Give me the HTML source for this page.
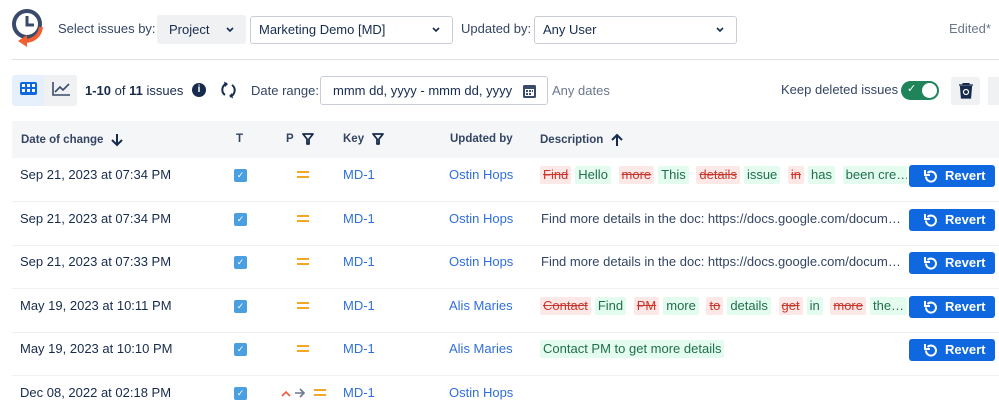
<!DOCTYPE html>
<html><head><meta charset="utf-8"><style>
*{box-sizing:border-box;margin:0;padding:0}
body{width:999px;height:410px;overflow:hidden;background:#fff;font-family:"Liberation Sans",Arial,sans-serif;font-size:13px;color:#172b4d;position:relative}
.a{position:absolute;white-space:nowrap}
.sel{position:absolute;border:1px solid #c9ced6;border-radius:3px;height:28px;line-height:26px;padding-left:8px;font-size:13px;background:#fff;white-space:nowrap}
.chev{position:absolute;right:12px;top:10px}
.hdr{position:absolute;left:12px;top:121px;width:987px;height:37px;background:#f5f6f8}
.hdr span{position:absolute;top:12px;font-size:11.5px;font-weight:bold;color:#344563;white-space:nowrap}
.hdr svg{vertical-align:middle;margin-left:8px}
.row{position:absolute;left:12px;width:987px;height:44px;border-bottom:1px solid #eef0f2}
.row .c{position:absolute;top:0;line-height:34px;font-size:13px;white-space:nowrap}
.cb{position:absolute;left:222px;top:11px;width:13px;height:13px;background:#4a9fe0;border-radius:2px;color:#fff;font-size:9px;text-align:center;line-height:13px}
.eq{position:absolute;top:13px;width:12px;height:7px;border-top:2px solid #f5a623;border-bottom:2px solid #f5a623}
.lnk{color:#2f6fdc}
.rev{position:absolute;left:897px;top:7px;width:86px;height:22px;background:#1068e0;border-radius:3px;color:#fff;font-weight:bold;font-size:13px;line-height:22px;padding-left:36px}
.rev svg{position:absolute;left:14px;top:4px}
.d{position:absolute;left:528px;top:8px;height:18px;line-height:18px;font-size:13px;white-space:nowrap;width:367px;overflow:hidden;color:#344563}
.d i{font-style:normal;display:inline-block;padding:0 3px;margin-right:4px;border-radius:2px}
.del{background:#fde8e8;color:#c9372c;text-decoration:line-through}
.ins{background:#e3fcef;color:#216e4e}
</style></head><body>
<svg class="a" style="left:10px;top:7px" width="38" height="44" viewBox="0 0 38 44"><circle cx="17" cy="17" r="13" fill="none" stroke="#3a4a6b" stroke-width="4"/><path d="M17 9v9h7" fill="none" stroke="#3a4a6b" stroke-width="3"/><path d="M31 20c-1 9-8 14-17 14" fill="none" stroke="#f06030" stroke-width="4"/><path d="M8 34l9-6v12z" fill="#f06030"/></svg>
<div class="a" style="left:58px;top:21px;color:#344563">Select issues by:</div>
<div class="a" style="left:157px;top:15px;width:89px;height:29px;background:#f0f1f3;border-radius:3px;line-height:29px;padding-left:12px">Project <svg style="position:absolute;right:12px;top:12px" width="8" height="5"><path d="M1 1l3 3 3-3" fill="none" stroke="#172b4d" stroke-width="1.6"/></svg></div>
<div class="sel" style="left:250px;top:16px;width:203px">Marketing Demo [MD]<svg class="chev" width="8" height="5"><path d="M1 1l3 3 3-3" fill="none" stroke="#172b4d" stroke-width="1.6"/></svg></div>
<div class="a" style="left:461px;top:21px;color:#344563">Updated by:</div>
<div class="sel" style="left:534px;top:16px;width:203px">Any User<svg class="chev" width="8" height="5"><path d="M1 1l3 3 3-3" fill="none" stroke="#172b4d" stroke-width="1.6"/></svg></div>
<div class="a" style="left:949px;top:21px;color:#6b778c">Edited*</div>
<div class="a" style="left:12px;top:59px;width:987px;height:1px;background:#dfe1e6"></div>
<div class="a" style="left:12px;top:75px;width:65px;height:31px;background:#f0f1f3;border-radius:3px"></div>
<div class="a" style="left:12px;top:75px;width:32px;height:31px;background:#e6f0fd;border-radius:3px"></div>
<svg class="a" style="left:20px;top:82px" width="17" height="13"><rect x="0" y="0" width="17" height="13" rx="2" fill="#1068e0"/><g fill="#fff"><rect x="2" y="2" width="3" height="3"/><rect x="7" y="2" width="3" height="3"/><rect x="12" y="2" width="3" height="3"/><rect x="2" y="7" width="3" height="3"/><rect x="7" y="7" width="3" height="3"/><rect x="12" y="7" width="3" height="3"/></g></svg>
<svg class="a" style="left:52px;top:82px" width="18" height="14"><path d="M1 0v13h17M3 10l5-5 3 3 6-6" fill="none" stroke="#3a4a6b" stroke-width="1.6"/></svg>
<div class="a" style="left:85px;top:83px"><b>1-10</b> of <b>11</b> issues</div>
<div class="a" style="left:192px;top:83px;width:14px;height:14px;border-radius:50%;background:#172b4d;color:#fff;font-size:10px;font-weight:bold;text-align:center;line-height:14px">i</div>
<svg class="a" style="left:220px;top:81px" width="17" height="18"><path d="M7 2.5A6.5 6.5 0 0 0 5 14M10 15.5A6.5 6.5 0 0 0 12 4" fill="none" stroke="#172b4d" stroke-width="2"/><path d="M7 0v5.5H2M10 18v-5.5h5" fill="none" stroke="#172b4d" stroke-width="0"/><path d="M4 0.5l4 2.5-3 3z M13 17.5l-4-2.5 3-3z" fill="#172b4d"/></svg>
<div class="a" style="left:251px;top:83px;color:#344563">Date range:</div>
<div class="sel" style="left:320px;top:76px;width:228px;height:29px;line-height:27px;padding-left:12px">mmm dd, yyyy - mmm dd, yyyy
<svg style="position:absolute;right:10px;top:6px" width="15" height="16"><rect x="1" y="2" width="13" height="13" rx="1.5" fill="#3a4a6b"/><rect x="3" y="6" width="9" height="7" fill="#fff"/><g fill="#3a4a6b"><rect x="4" y="7" width="2" height="2"/><rect x="7" y="7" width="2" height="2"/><rect x="10" y="7" width="1" height="2"/><rect x="4" y="10" width="2" height="2"/><rect x="7" y="10" width="2" height="2"/></g></svg></div>
<div class="a" style="left:552px;top:83px;color:#6b778c">Any dates</div>
<div class="a" style="left:781px;top:82px;color:#344563">Keep deleted issues</div>
<div class="a" style="left:901px;top:81px;width:38px;height:19px;border-radius:10px;background:#1f845a"><span style="position:absolute;left:6px;top:1px;color:#fff;font-size:11px">&#10003;</span><span style="position:absolute;right:2px;top:2px;width:15px;height:15px;border-radius:50%;background:#fff"></span></div>
<div class="a" style="left:951px;top:77px;width:29px;height:28px;background:#f0f1f3;border-radius:3px"></div>
<svg class="a" style="left:959px;top:83px" width="14" height="16"><path d="M0 2h14M4 2V0h6v2M1.5 3.5h11L11.5 15h-9z" fill="#172b4d" stroke="#172b4d" stroke-width="1.2"/><circle cx="7" cy="9" r="2.5" fill="none" stroke="#fff" stroke-width="1.2"/></svg>
<div class="a" style="left:988px;top:77px;width:11px;height:28px;background:#f0f1f3"></div>
<div class="hdr">
<span style="left:9px">Date of change<svg width="12" height="14"><path d="M6 1v11M1 7l5 5 5-5" fill="none" stroke="#172b4d" stroke-width="2"/></svg></span>
<span style="left:224px">T</span>
<span style="left:274px">P<svg width="12" height="12"><path d="M1 1h10L7 6v5H5V6z" fill="none" stroke="#172b4d" stroke-width="1.8" stroke-linejoin="round"/></svg></span>
<span style="left:331px">Key<svg width="12" height="12"><path d="M1 1h10L7 6v5H5V6z" fill="none" stroke="#172b4d" stroke-width="1.8" stroke-linejoin="round"/></svg></span>
<span style="left:438px">Updated by</span>
<span style="left:528px">Description<svg width="12" height="14"><path d="M6 13V2M1 7l5-5 5 5" fill="none" stroke="#172b4d" stroke-width="2"/></svg></span>
</div>
<div class="row" style="top:158px"><div class="c" style="left:8px">Sep 21, 2023 at 07:34 PM</div><div class="cb">&#10003;</div><div class="eq" style="left:285px"></div><div class="c lnk" style="left:331px">MD-1</div><div class="c lnk" style="left:437px">Ostin Hops</div>
<div class="d"><i class="del">Find</i><i class="ins">Hello</i> <i class="del">more</i><i class="ins">This</i> <i class="del">details</i><i class="ins">issue</i> <i class="del">in</i><i class="ins">has</i> <i class="ins">been cre…</i></div>
<div class="rev"><svg width="15" height="15"><path d="M3 7.5a5 5 0 1 0 1.5-3.5" fill="none" stroke="#fff" stroke-width="2"/><path d="M2 1v5h5" fill="none" stroke="#fff" stroke-width="2"/></svg>Revert</div></div>
<div class="row" style="top:202px"><div class="c" style="left:8px">Sep 21, 2023 at 07:34 PM</div><div class="cb">&#10003;</div><div class="eq" style="left:285px"></div><div class="c lnk" style="left:331px">MD-1</div><div class="c lnk" style="left:437px">Ostin Hops</div>
<div class="d" style="left:529px">Find more details in the doc: https://docs.google.com/docum…</div>
<div class="rev"><svg width="15" height="15"><path d="M3 7.5a5 5 0 1 0 1.5-3.5" fill="none" stroke="#fff" stroke-width="2"/><path d="M2 1v5h5" fill="none" stroke="#fff" stroke-width="2"/></svg>Revert</div></div>
<div class="row" style="top:245px"><div class="c" style="left:8px">Sep 21, 2023 at 07:33 PM</div><div class="cb">&#10003;</div><div class="eq" style="left:285px"></div><div class="c lnk" style="left:331px">MD-1</div><div class="c lnk" style="left:437px">Ostin Hops</div>
<div class="d" style="left:529px">Find more details in the doc: https://docs.google.com/docum…</div>
<div class="rev"><svg width="15" height="15"><path d="M3 7.5a5 5 0 1 0 1.5-3.5" fill="none" stroke="#fff" stroke-width="2"/><path d="M2 1v5h5" fill="none" stroke="#fff" stroke-width="2"/></svg>Revert</div></div>
<div class="row" style="top:289px"><div class="c" style="left:8px">May 19, 2023 at 10:11 PM</div><div class="cb">&#10003;</div><div class="eq" style="left:285px"></div><div class="c lnk" style="left:331px">MD-1</div><div class="c lnk" style="left:437px">Alis Maries</div>
<div class="d"><i class="del">Contact</i><i class="ins">Find</i> <i class="del">PM</i><i class="ins">more</i> <i class="del">to</i><i class="ins">details</i> <i class="del">get</i><i class="ins">in</i> <i class="del">more</i><i class="ins">the…</i><i class="del">&nbsp;&nbsp;</i></div>
<div class="rev"><svg width="15" height="15"><path d="M3 7.5a5 5 0 1 0 1.5-3.5" fill="none" stroke="#fff" stroke-width="2"/><path d="M2 1v5h5" fill="none" stroke="#fff" stroke-width="2"/></svg>Revert</div></div>
<div class="row" style="top:332px"><div class="c" style="left:8px">May 19, 2023 at 10:10 PM</div><div class="cb">&#10003;</div><div class="eq" style="left:285px"></div><div class="c lnk" style="left:331px">MD-1</div><div class="c lnk" style="left:437px">Alis Maries</div>
<div class="d"><i class="ins">Contact PM to get more details</i></div>
<div class="rev"><svg width="15" height="15"><path d="M3 7.5a5 5 0 1 0 1.5-3.5" fill="none" stroke="#fff" stroke-width="2"/><path d="M2 1v5h5" fill="none" stroke="#fff" stroke-width="2"/></svg>Revert</div></div>
<div class="row" style="top:376px;border:none"><div class="c" style="left:8px">Dec 08, 2022 at 02:18 PM</div><div class="cb">&#10003;</div>
<svg style="position:absolute;left:269px;top:12px" width="42" height="10"><path d="M1 8l4-4 4 4" fill="none" stroke="#f05a3c" stroke-width="1.6"/><path d="M14 5h9M19 1l4 4-4 4" fill="none" stroke="#6b778c" stroke-width="1.6"/></svg>
<div class="eq" style="left:302px"></div><div class="c lnk" style="left:331px">MD-1</div><div class="c lnk" style="left:437px">Ostin Hops</div></div>
</body></html>
